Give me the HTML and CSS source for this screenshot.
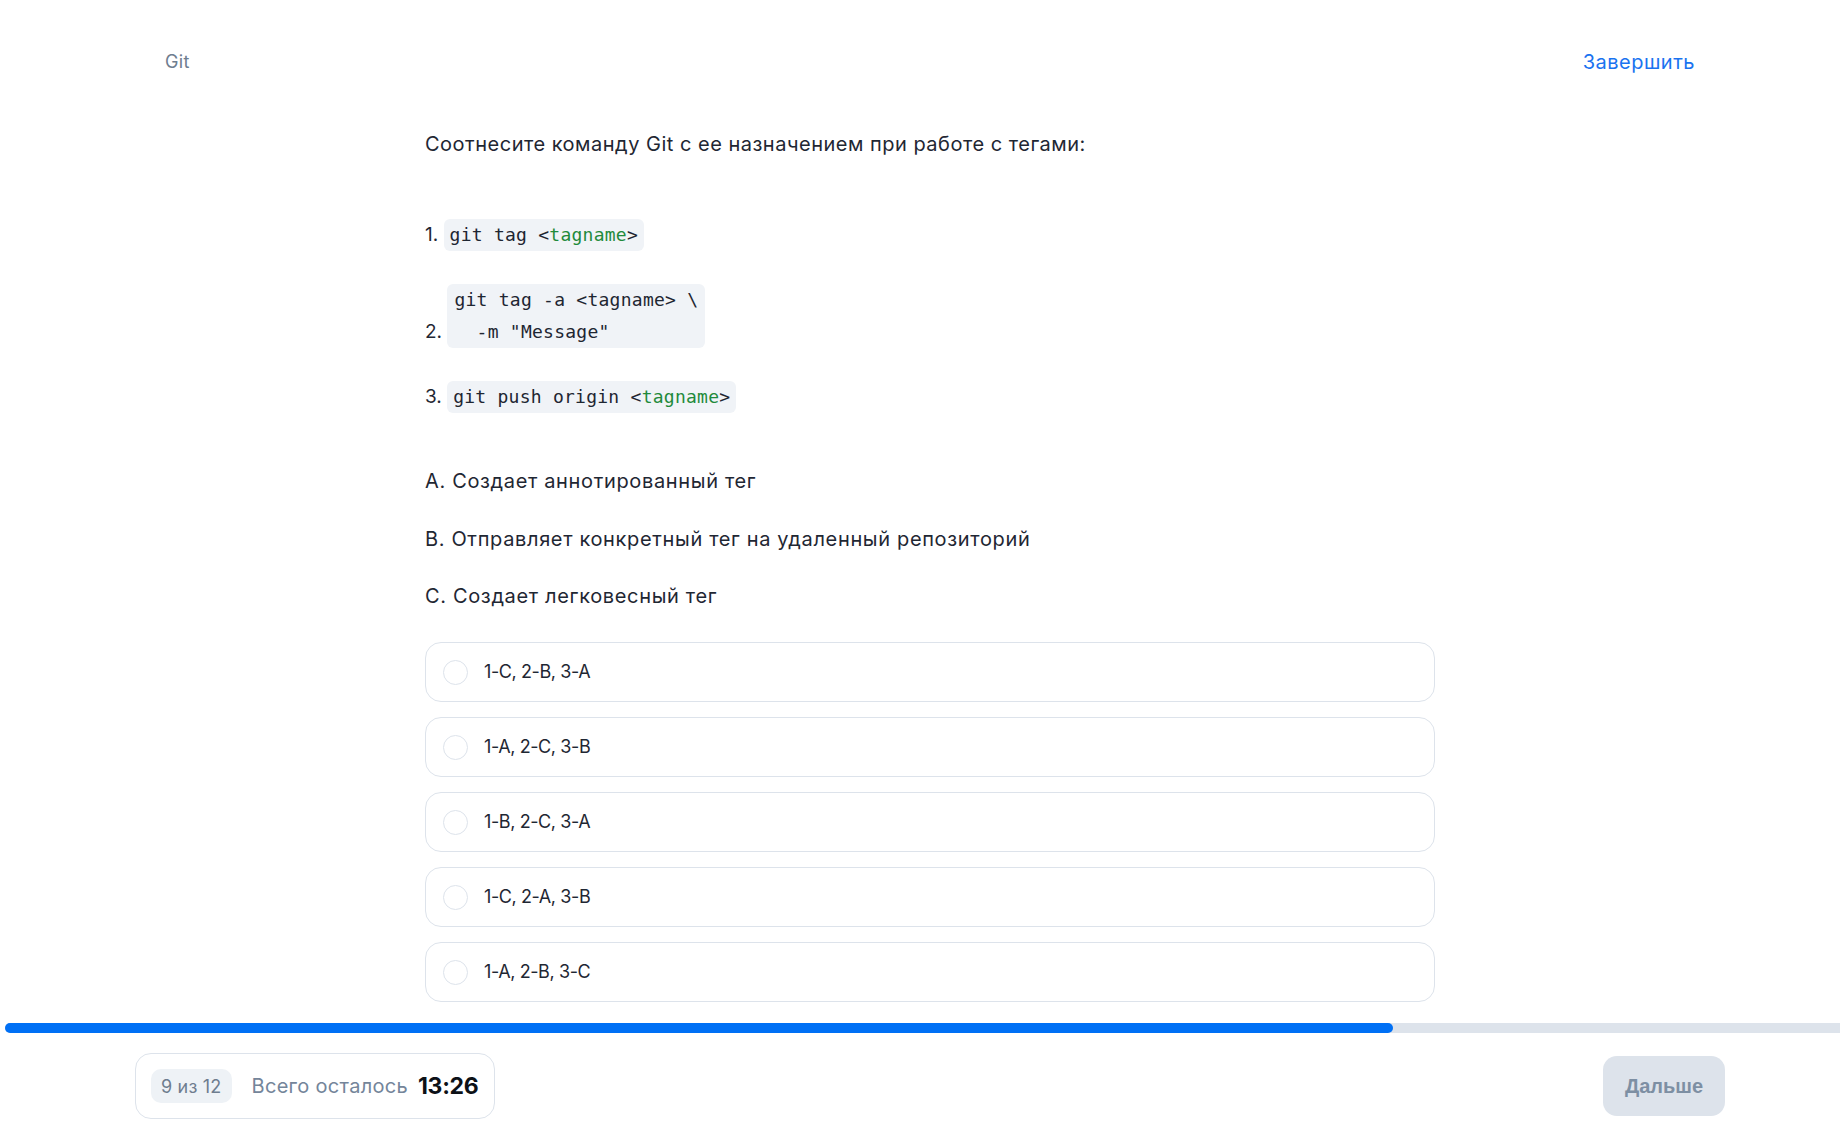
FILE: index.html
```html
<!DOCTYPE html>
<html lang="ru">
<head>
<meta charset="utf-8">
<title>Git — тест</title>
<link rel="stylesheet" href="styles.css">
</head>
<body>
<div class="page">
  <header class="topbar">
    <span class="topic">Git</span>
    <a class="finish" href="#">Завершить</a>
  </header>

  <main class="quiz">
    <p class="question">Соотнесите команду Git с ее назначением при работе с тегами:</p>

    <ol class="commands">
      <li><span class="num">1.</span> <code class="code">git tag &lt;<span class="arg">tagname</span>&gt;</code></li>
      <li><span class="num">2.</span> <code class="code multi">git tag -a &lt;tagname&gt; \
  -m "Message"</code></li>
      <li><span class="num">3.</span> <code class="code">git push origin &lt;<span class="arg">tagname</span>&gt;</code></li>
    </ol>

    <div class="meanings">
      <p>A. Создает аннотированный тег</p>
      <p>B. Отправляет конкретный тег на удаленный репозиторий</p>
      <p>C. Создает легковесный тег</p>
    </div>

    <div class="options">
      <label class="option"><span class="radio"></span><span class="opt-text">1-C, 2-B, 3-A</span></label>
      <label class="option"><span class="radio"></span><span class="opt-text">1-A, 2-C, 3-B</span></label>
      <label class="option"><span class="radio"></span><span class="opt-text">1-B, 2-C, 3-A</span></label>
      <label class="option"><span class="radio"></span><span class="opt-text">1-C, 2-A, 3-B</span></label>
      <label class="option"><span class="radio"></span><span class="opt-text">1-A, 2-B, 3-C</span></label>
    </div>
  </main>
</div>

<div class="progress"><div class="progress-fill" style="width: 75.65%"></div></div>

<footer class="footer">
  <div class="status">
    <span class="counter">9 из 12</span>
    <span class="remaining">Всего осталось</span>
    <span class="timer">13:26</span>
  </div>
  <button class="next" type="button">Дальше</button>
</footer>
</body>
</html>
```

FILE: styles.css
```css
html, body {
  margin: 0;
  padding: 0;
  background: #ffffff;
}

body {
  font-family: "Inter", "Liberation Sans", sans-serif;
  color: #1f2733;
}

.page {
  padding-left: 20px;
}

.topbar {
  display: flex;
  justify-content: space-between;
  align-items: center;
  padding: 50px 145px 0 145px;
  height: 24px;
}

.topic {
  font-size: 18px;
  line-height: 24px;
  letter-spacing: 0.3px;
  color: #6e7d8f;
}

.finish {
  font-size: 20px;
  line-height: 24px;
  letter-spacing: 0.5px;
  color: #1a73f0;
  text-decoration: none;
}

.quiz {
  width: 1010px;
  margin: 0 auto;
}

.question {
  margin: 56px 0 0 0;
  font-size: 20px;
  letter-spacing: 0.5px;
  line-height: 28px;
  color: #1f2733;
}

.commands {
  list-style: none;
  margin: 61px 0 0 0;
  padding: 0;
}

.commands li {
  font-size: 19px;
  line-height: 32px;
  margin-bottom: 33px;
}

.commands li:last-child {
  margin-bottom: 0;
}

.code {
  display: inline-block;
  vertical-align: bottom;
  font-family: "DejaVu Sans Mono", "Liberation Mono", monospace;
  font-size: 18px;
  letter-spacing: 0.25px;
  line-height: 32px;
  padding: 0 6px;
  background: #f0f3f7;
  border-radius: 6px;
  color: #1e2632;
  white-space: pre;
}

.code.multi {
  padding: 0 7px;
}

.arg {
  color: #1f8a3b;
}

.meanings {
  margin-top: 54px;
}

.meanings p {
  margin: 0 0 29.5px 0;
  font-size: 20px;
  letter-spacing: 0.65px;
  line-height: 28px;
}

.meanings p:last-child {
  margin-bottom: 0;
}

.options {
  margin-top: 32px;
  display: flex;
  flex-direction: column;
  gap: 15px;
}

.option {
  display: flex;
  align-items: center;
  gap: 16px;
  height: 60px;
  box-sizing: border-box;
  padding-left: 17px;
  border: 1px solid #dde3eb;
  border-radius: 16px;
  cursor: pointer;
}

.radio {
  width: 25px;
  height: 25px;
  box-sizing: border-box;
  border: 1.5px solid #dde3eb;
  border-radius: 50%;
  flex: none;
}

.opt-text {
  font-size: 18px;
  letter-spacing: -0.4px;
  line-height: 24px;
  color: #1f2733;
}

.progress {
  margin: 21px 0 0 5px;
  height: 10px;
  background: #dde3eb;
  border-radius: 5px 0 0 5px;
}

.progress-fill {
  height: 100%;
  background: #0070f5;
  border-radius: 5px;
}

.footer {
  display: flex;
  justify-content: space-between;
  align-items: center;
  padding: 20px 115px 0 135px;
}

.status {
  display: flex;
  align-items: center;
  height: 66px;
  box-sizing: border-box;
  padding: 0 16px 0 15px;
  border: 1px solid #dde3eb;
  border-radius: 16px;
}

.counter {
  display: inline-flex;
  align-items: center;
  height: 34px;
  padding: 0 10px;
  background: #eef2f6;
  border-radius: 10px;
  font-size: 18px;
  letter-spacing: 0.2px;
  color: #6e7d8f;
}

.remaining {
  margin-left: 20px;
  font-size: 20px;
  letter-spacing: 0.3px;
  color: #74859a;
}

.timer {
  margin-left: 10px;
  font-size: 23px;
  font-weight: 700;
  letter-spacing: -0.3px;
  color: #0d1117;
}

.next {
  width: 122px;
  height: 60px;
  border: none;
  border-radius: 14px;
  background: #dde3eb;
  color: #7d8fa3;
  font-family: "Liberation Sans", sans-serif;
  font-size: 20px;
  font-weight: 700;
  cursor: default;
}
```
